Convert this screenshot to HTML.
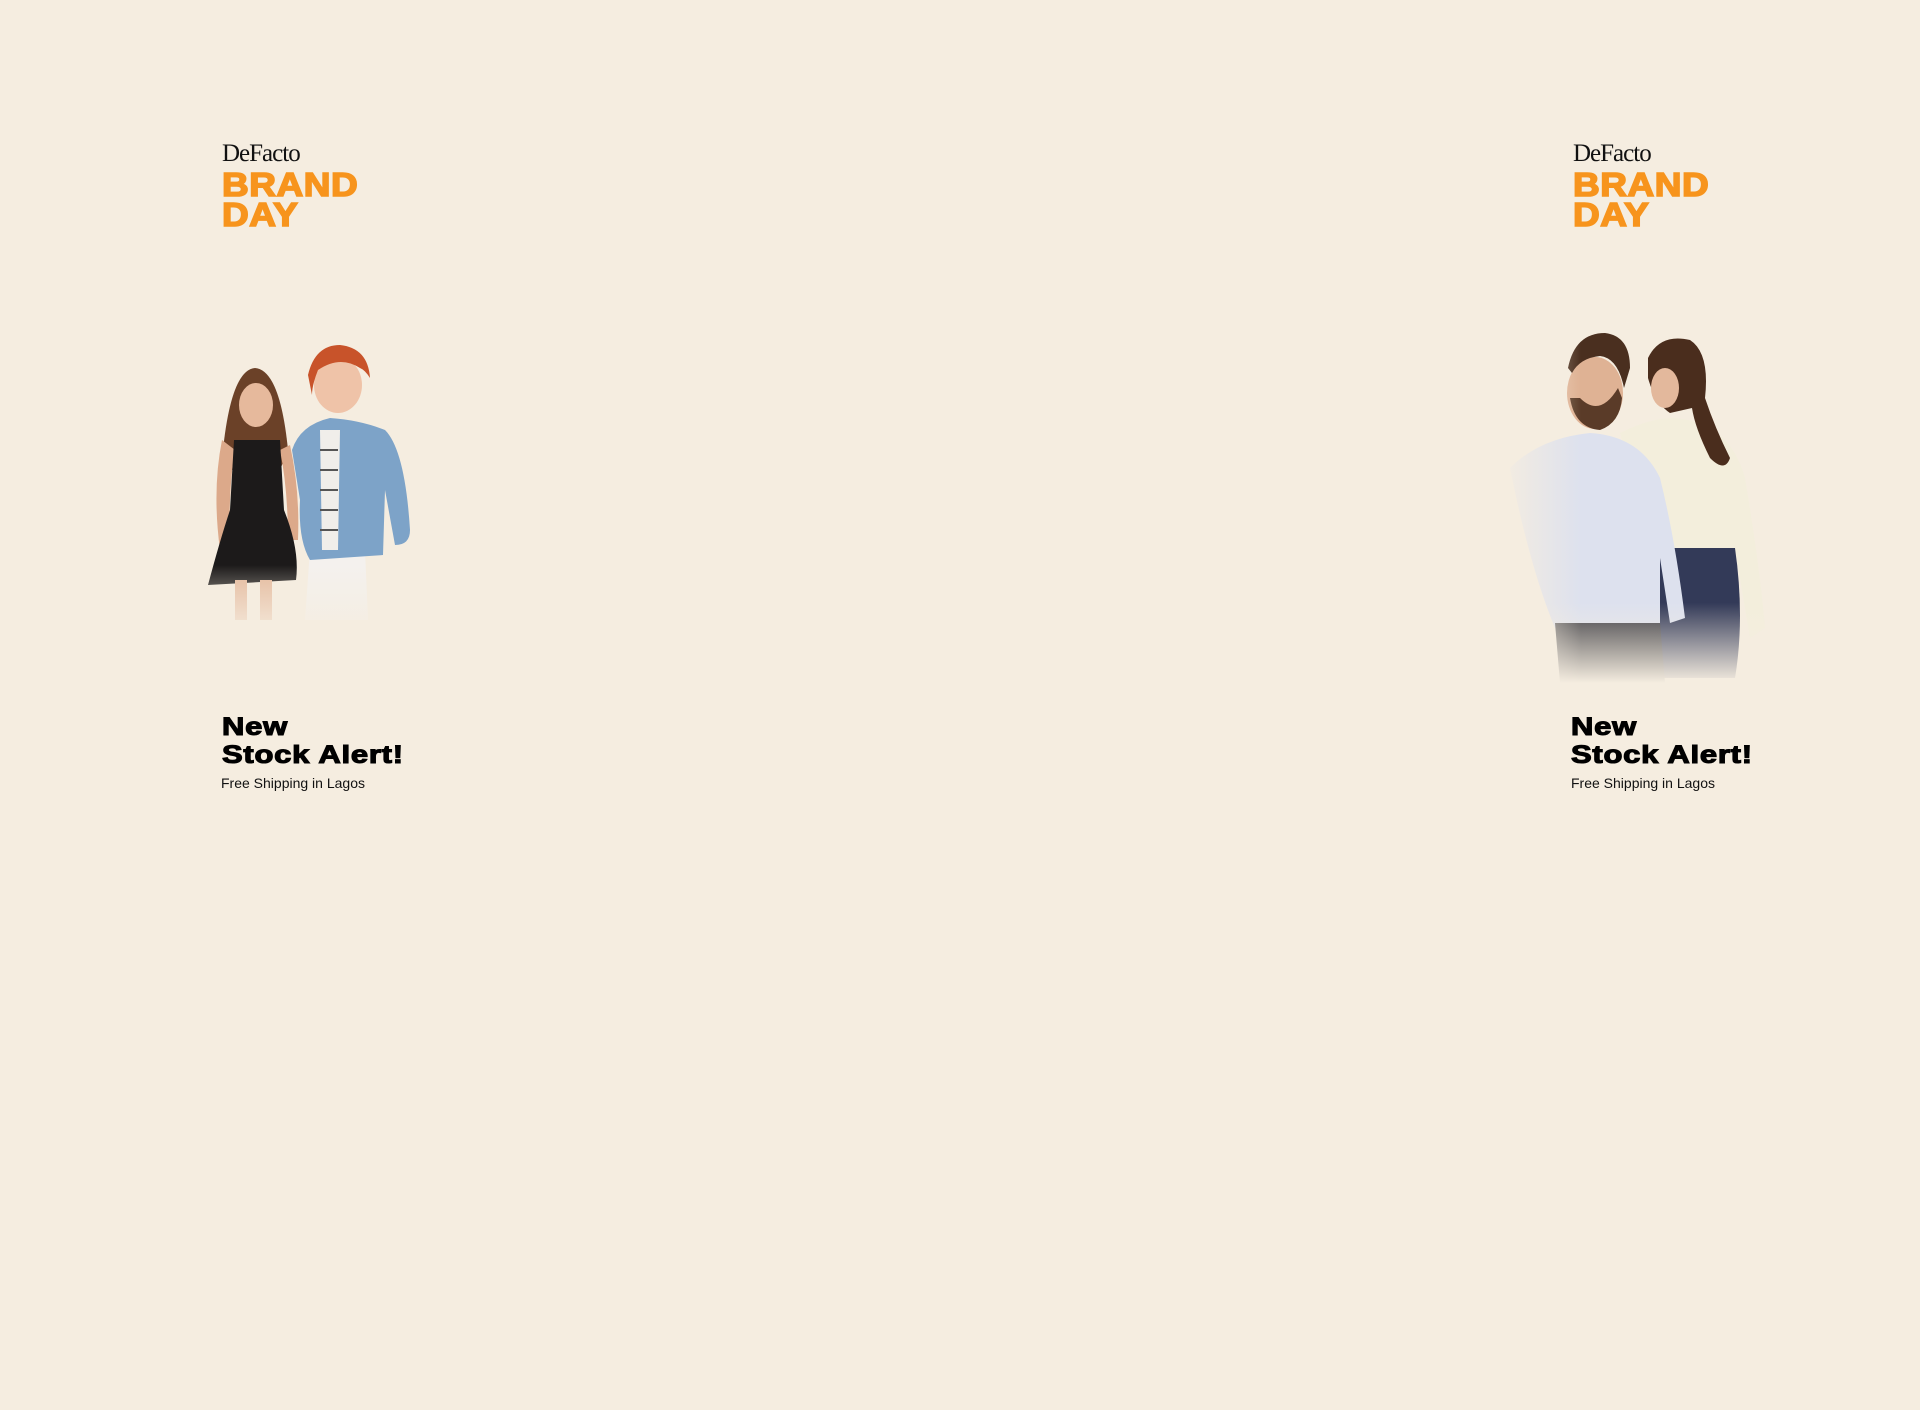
<!DOCTYPE html>
<html><head><meta charset="utf-8"><style>
html,body{margin:0;padding:0;}
body{width:1920px;height:1410px;background:#f5ede0;position:relative;overflow:hidden;font-family:"Liberation Sans",sans-serif;}
.blk{position:absolute;}
.df{position:absolute;font-family:"Liberation Serif",serif;font-size:25px;letter-spacing:-1px;color:#111;line-height:1;}
.bd{position:absolute;font-weight:bold;color:#f7941d;font-size:33px;line-height:30px;letter-spacing:0.5px;transform:scaleX(1.12);transform-origin:left top;-webkit-text-stroke:1.6px #f7941d;}
.na{position:absolute;font-weight:bold;color:#000;font-size:25px;line-height:28px;transform:scaleX(1.24);transform-origin:left top;letter-spacing:0.6px;-webkit-text-stroke:1.1px #000;}
.fs{position:absolute;font-size:14px;color:#111;}
</style></head><body>

<!-- Left block -->
<div class="df" style="left:222px;top:141px;">DeFacto</div>
<div class="bd" style="left:222px;top:170px;">BRAND<br>DAY</div>
<svg class="blk" style="left:200px;top:340px" width="230" height="300" viewBox="0 0 230 300">
<defs>
<linearGradient id="fade" x1="0" y1="0" x2="0" y2="1"><stop offset="0.75" stop-color="#f5ede0" stop-opacity="0"/><stop offset="1" stop-color="#f5ede0" stop-opacity="1"/></linearGradient>
</defs>
<path d="M22 120 Q30 30 55 28 Q80 30 88 110 L80 130 L30 130 Z" fill="#6b4128"/>
<ellipse cx="56" cy="65" rx="17" ry="22" fill="#e6b99c"/>
<path d="M22 100 Q12 150 20 210 L30 210 Q28 150 35 110Z" fill="#dca98a"/>
<path d="M90 105 Q100 150 98 200 L88 200 Q88 150 80 110Z" fill="#dca98a"/>
<path d="M34 100 L80 100 L84 170 Q100 210 96 240 L8 245 Q20 200 30 170 Z" fill="#1c1a1a"/>
<rect x="35" y="240" width="12" height="40" fill="#e4b89b"/><rect x="60" y="240" width="12" height="40" fill="#e4b89b"/>
<path d="M105 280 L110 210 L165 210 L168 280Z" fill="#f4f1ee"/>
<path d="M92 110 Q100 85 130 78 Q160 80 185 90 Q205 110 210 190 Q210 205 195 205 L185 150 L183 215 L110 220 Q98 200 100 160 Z" fill="#7da3c8"/>
<path d="M120 90 L140 90 L138 210 L122 210Z" fill="#f0eeea"/>
<g stroke="#555" stroke-width="2"><line x1="120" y1="110" x2="138" y2="110"/><line x1="120" y1="130" x2="138" y2="130"/><line x1="120" y1="150" x2="138" y2="150"/><line x1="120" y1="170" x2="138" y2="170"/><line x1="120" y1="190" x2="138" y2="190"/></g>
<ellipse cx="138" cy="45" rx="24" ry="28" fill="#efc3a8"/>
<path d="M108 35 Q115 5 140 5 Q168 8 170 38 Q165 30 160 28 Q140 15 118 30 Q112 45 112 55Z" fill="#c8532a"/>
<rect x="0" y="0" width="230" height="300" fill="url(#fade)"/>
</svg>
<div class="na" style="left:222px;top:713px;">New<br>Stock Alert!</div>
<div class="fs" style="left:221px;top:775px;">Free Shipping in Lagos</div>

<!-- Right block -->
<div class="df" style="left:1573px;top:141px;">DeFacto</div>
<div class="bd" style="left:1573px;top:170px;">BRAND<br>DAY</div>
<svg class="blk" style="left:1500px;top:318px" width="270" height="365" viewBox="0 0 270 365">
<defs>
<linearGradient id="fade2" x1="0" y1="0" x2="0" y2="1"><stop offset="0.78" stop-color="#f5ede0" stop-opacity="0"/><stop offset="1" stop-color="#f5ede0" stop-opacity="1"/></linearGradient>
<linearGradient id="fadeL" x1="0" y1="0" x2="1" y2="0"><stop offset="0" stop-color="#f5ede0" stop-opacity="1"/><stop offset="0.3" stop-color="#f5ede0" stop-opacity="0"/></linearGradient>
</defs>
<path d="M120 115 Q150 100 175 100 Q230 105 245 160 Q260 250 265 310 L250 320 L235 230 L230 240 Q245 300 230 360 L140 360 L150 230 Z" fill="#f3eedc"/>
<path d="M150 230 L235 230 Q245 300 235 360 L150 360Z" fill="#333a58"/>
<path d="M148 40 Q160 15 190 22 Q210 35 205 80 Q215 110 230 140 Q225 155 210 140 Q195 110 192 90 L170 95 Q155 85 148 60Z" fill="#4a2d1d"/>
<ellipse cx="165" cy="70" rx="14" ry="20" fill="#e3b89c"/>
<path d="M10 150 Q40 120 90 115 Q140 118 160 160 Q175 220 185 300 L170 305 L160 240 L160 310 L55 310 Q30 250 10 150Z" fill="#dde1ee"/>
<path d="M55 305 L160 305 L165 365 L60 365Z" fill="#3a3a40"/>
<ellipse cx="95" cy="75" rx="28" ry="36" fill="#dfb294"/>
<path d="M70 80 Q75 110 100 112 Q120 105 122 80 L118 70 Q100 100 80 80Z" fill="#5a3b28"/>
<path d="M68 50 Q75 15 105 15 Q130 18 130 50 L124 70 Q118 40 100 38 Q80 40 72 55Z" fill="#4a2f1f"/>
<rect x="0" y="0" width="270" height="365" fill="url(#fadeL)"/>
<rect x="0" y="0" width="270" height="365" fill="url(#fade2)"/>
</svg>
<div class="na" style="left:1571px;top:713px;">New<br>Stock Alert!</div>
<div class="fs" style="left:1571px;top:775px;">Free Shipping in Lagos</div>

</body></html>
